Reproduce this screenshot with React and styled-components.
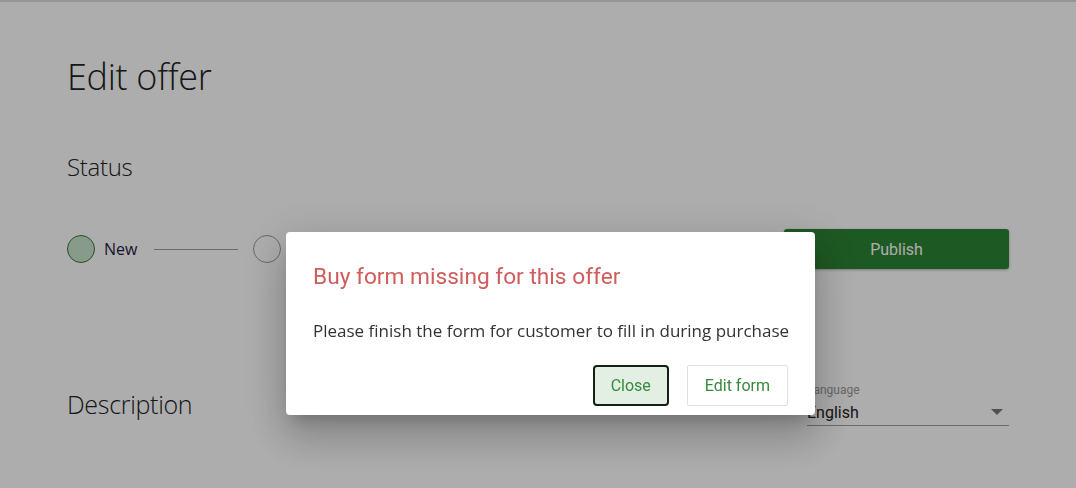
import React from "react";
import styled, { createGlobalStyle } from "styled-components";

const Global = createGlobalStyle`
  html, body { margin: 0; padding: 0; background: #fff; }
  body { width: 1076px; height: 488px; overflow: hidden; font-family: "Open Sans", sans-serif; }
`;

const Page = styled.div`
  box-sizing: border-box;
  height: 488px;
  border-top: 2px solid #dcdcdc;
  padding: 53px 67px 0 67px;
  width: 1076px;
`;

const Content = styled.div`
  width: 942px;
  display: flex;
  flex-direction: column;
`;

const Title = styled.h1`
  margin: 0;
  font-family: "Open Sans", sans-serif;
  font-weight: 300;
  font-size: 36px;
  line-height: 44px;
  color: #222;
  letter-spacing: -0.3px;
`;

const SectionTitle = styled.h2`
  margin: ${(p) => p.$mt || 0}px 0 0 0;
  font-family: "Open Sans", sans-serif;
  font-weight: 300;
  font-size: ${(p) => p.$size || 24}px;
  line-height: 32px;
  color: #222;
  letter-spacing: -0.3px;
`;

const StatusRow = styled.div`
  margin-top: 46px;
  display: flex;
  align-items: center;
  justify-content: space-between;
  height: 40px;
`;

const Stepper = styled.div`
  display: flex;
  align-items: center;
`;

const StepDot = styled.div`
  box-sizing: border-box;
  width: 28px;
  height: 28px;
  border-radius: 50%;
  border: 1px solid ${(p) => (p.$active ? "#2f7a35" : "#9a9a9a")};
  background: ${(p) => (p.$active ? "#c9e4ca" : "transparent")};
`;

const StepLabel = styled.span`
  margin-left: 9px;
  font-family: "Open Sans", sans-serif;
  font-size: 16px;
  color: #23233f;
`;

const StepLine = styled.div`
  width: 84px;
  height: 1px;
  background: #a0a0a0;
  margin: 0 15px 0 17px;
`;

const PublishButton = styled.button`
  width: 225px;
  height: 40px;
  border: none;
  border-radius: 3px;
  background: #2c8333;
  color: #fff;
  font-family: Roboto, sans-serif;
  font-size: 16px;
  box-shadow: 0 1px 3px rgba(0, 0, 0, 0.3);
`;

const DescRow = styled.div`
  margin-top: 119px;
  display: flex;
  justify-content: space-between;
  align-items: flex-start;
`;

const SelectField = styled.div`
  width: 202px;
  margin-top: -5px;
  display: flex;
  flex-direction: column;
`;

const SelectLabel = styled.span`
  font-family: Roboto, sans-serif;
  font-size: 12px;
  line-height: 14px;
  color: #999;
  margin-bottom: 3px;
`;

const SelectValue = styled.div`
  display: flex;
  justify-content: space-between;
  align-items: center;
  height: 24px;
  border-bottom: 1px solid #9e9e9e;
  font-family: Roboto, sans-serif;
  font-size: 16px;
  color: #222;
  padding-bottom: 1px;
`;

const Arrow = styled.span`
  width: 0;
  height: 0;
  border-left: 6px solid transparent;
  border-right: 6px solid transparent;
  border-top: 6px solid #777;
  margin-right: 6px;
`;

const Overlay = styled.div`
  position: fixed;
  inset: 0;
  background: rgba(0, 0, 0, 0.32);
`;

const Dialog = styled.div`
  position: fixed;
  left: 286px;
  top: 232px;
  width: 529px;
  height: 183px;
  box-sizing: border-box;
  background: #fff;
  border-radius: 4px;
  box-shadow: 0 11px 15px -7px rgba(0, 0, 0, 0.2), 0 24px 38px 3px rgba(0, 0, 0, 0.14),
    0 9px 46px 8px rgba(0, 0, 0, 0.12);
  padding: 30px 27px 0 27px;
  display: flex;
  flex-direction: column;
`;

const DialogTitle = styled.h3`
  margin: 0;
  font-family: Roboto, sans-serif;
  font-weight: 400;
  font-size: 22.7px;
  line-height: 30px;
  color: #d05c5c;
`;

const DialogText = styled.p`
  margin: 28px 0 0 0;
  font-family: "Open Sans", sans-serif;
  font-size: 17px;
  line-height: 22px;
  color: #333;
  letter-spacing: 0px;
  white-space: nowrap;
`;

const Actions = styled.div`
  margin-top: 23px;
  display: flex;
  justify-content: flex-end;
  gap: 18px;
`;

const DialogButton = styled.button`
  box-sizing: border-box;
  height: 41px;
  padding: 0 ${(p) => (p.$primary ? 16 : 17)}px;
  border-radius: ${(p) => (p.$primary ? 4 : 2)}px;
  border: ${(p) => (p.$primary ? "2px solid #152015" : "1px solid #e0e0e0")};
  background: ${(p) => (p.$primary ? "#e4efe4" : "#fff")};
  color: #358a3b;
  font-family: Roboto, sans-serif;
  font-size: 16px;
  cursor: pointer;
`;

export default function App() {
  return (
    <>
      <Global />
      <Page>
        <Content>
          <Title>Edit offer</Title>
          <SectionTitle $mt={52}>Status</SectionTitle>
          <StatusRow>
            <Stepper>
              <StepDot $active />
              <StepLabel>New</StepLabel>
              <StepLine />
              <StepDot />
            </Stepper>
            <PublishButton>Publish</PublishButton>
          </StatusRow>
          <DescRow>
            <SectionTitle $size={25}>Description</SectionTitle>
            <SelectField>
              <SelectLabel>Language</SelectLabel>
              <SelectValue>
                English
                <Arrow />
              </SelectValue>
            </SelectField>
          </DescRow>
        </Content>
      </Page>
      <Overlay />
      <Dialog role="dialog">
        <DialogTitle>Buy form missing for this offer</DialogTitle>
        <DialogText>Please finish the form for customer to fill in during purchase</DialogText>
        <Actions>
          <DialogButton $primary>Close</DialogButton>
          <DialogButton>Edit form</DialogButton>
        </Actions>
      </Dialog>
    </>
  );
}
